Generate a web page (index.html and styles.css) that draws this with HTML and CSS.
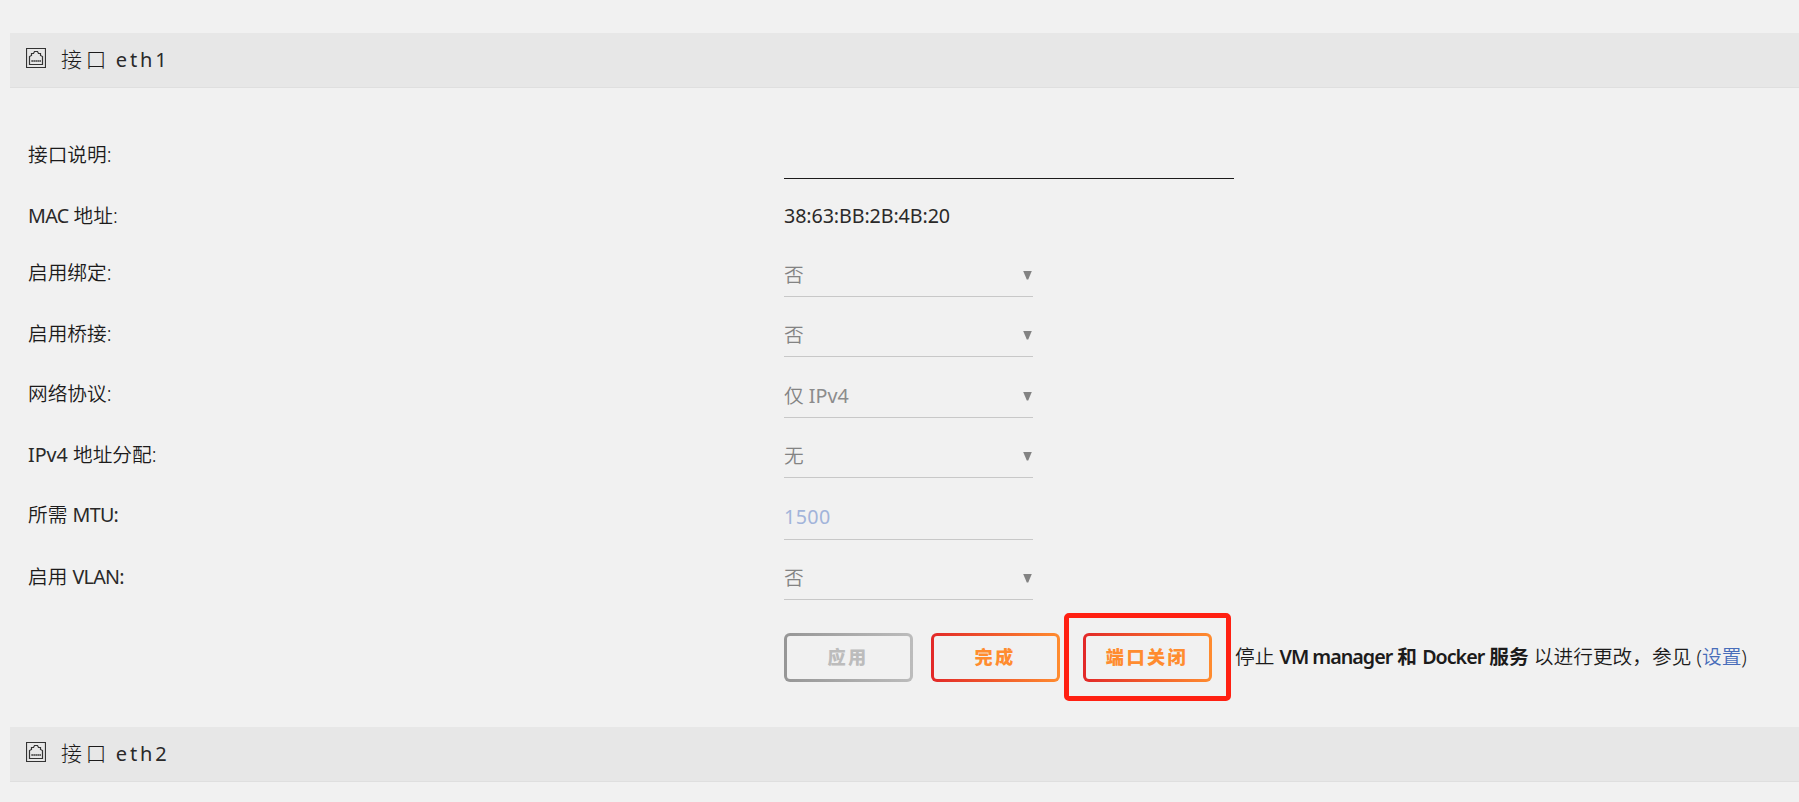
FILE: index.html
```html
<!DOCTYPE html>
<html lang="zh-CN">
<head>
<meta charset="utf-8">
<title>网络设置</title>
<link rel="stylesheet" href="styles.css">
</head>
<body>
<svg class="defs" width="0" height="0">
  <symbol id="port" viewBox="0 0 20 20">
    <path d="M.5 .5H19.5V19.5H.5Z" fill="none" stroke="#333" stroke-width="1.200"/>
    <path d="M3.500 16.500V8.500L5.500 7.500V5.500H7.500L8.500 3.500H11.500L12.500 5.500H14.500V7.500L16.500 8.500V16.500Z" fill="none" stroke="#333" stroke-width="1.200"/>
    <path d="M5.500 13H15" fill="none" stroke="#333" stroke-width="2" stroke-dasharray="1.200 .8"/>
  </symbol>
</svg>
<main class="page">
  <h2 class="title"><svg class="icon"><use href="#port"/></svg><span>接口</span><span class="lat">eth1</span></h2>
  <form class="settings">
    <div class="row row-desc"><div class="label">接口说明:</div><div class="field wide"></div></div>
    <div class="row row-mac"><div class="label"><span class="lat">MAC</span> 地址:</div><div class="mac">38:63:BB:2B:4B:20</div></div>
    <div class="row"><div class="label">启用绑定:</div><div class="field">否<i class="arrow"></i></div></div>
    <div class="row row-bridge"><div class="label">启用桥接:</div><div class="field">否<i class="arrow"></i></div></div>
    <div class="row row-proto"><div class="label">网络协议:</div><div class="field"><span>仅 <span class="lat ip">IPv4</span></span><i class="arrow"></i></div></div>
    <div class="row row-assign"><div class="label"><span class="lat ip">IPv4</span> 地址分配:</div><div class="field">无<i class="arrow"></i></div></div>
    <div class="row row-mtu"><div class="label">所需 <span class="lat">MTU:</span></div><div class="field mtu">1500</div></div>
    <div class="row row-vlan"><div class="label">启用 <span class="lat">VLAN:</span></div><div class="field">否<i class="arrow"></i></div></div>
    <div class="actions">
      <span class="btn disabled">应用</span>
      <span class="btn">完成</span>
      <span class="marked"><span class="btn">端口关闭</span></span>
      <div class="note">停止 <b><span class="vm">VM manager</span> 和 <span class="docker">Docker</span> 服务</b> 以进行更改，参见 (<a>设置</a>)</div>
    </div>
  </form>
  <h2 class="title"><svg class="icon"><use href="#port"/></svg><span>接口</span><span class="lat">eth2</span></h2>
</main>
</body>
</html>
```
FILE: styles.css
```css
*, *::after { box-sizing: border-box; }
body {
  margin: 0;
  height: 802px;
  overflow: hidden;
  background: #f1f1f1;
  color: #1c1b1b;
  font: 350 19.7px/26px "Noto Sans", "Noto Sans CJK SC", sans-serif;
}
.defs { position: absolute; }
.page { padding: 33px 0 0 10px; }
.title {
  display: flex;
  align-items: center;
  height: 55px;
  margin: 0;
  padding: 0 0 2px 16px;
  background: #e7e7e7;
  border-bottom: 1px solid #dfdfdf;
  font-size: 21px;
  font-weight: 300;
  letter-spacing: 3.4px;
  white-space: pre;
}
.title .icon { width: 20px; height: 20px; margin: 0 15px 2px 0; }
.title .lat { margin: 1px 0 0 6px; font-size: 20px; letter-spacing: 2.9px; }
.lat { color: #2a2929; font-weight: 400; letter-spacing: -0.7px; }
.lat.ip { letter-spacing: 0; }
.field .lat { color: #8c8c8c; }
.settings { height: 639px; padding-top: 37px; }
.row {
  display: grid;
  grid-template-columns: 756px 1fr;
  align-items: end;
  height: 60px;
  padding-left: 18px;
}
.row-desc { height: 54px; }
.row-mac { height: 58px; }
.row-mac .label, .row-mac .mac { margin-bottom: 8px; }
.row-proto { height: 61px; }
.row-mtu { height: 62px; }
.label { margin-bottom: 11px; }
.row-bridge .label, .row-assign .label, .row-vlan .label { margin-bottom: 10px; }
.row-mtu .label { margin-bottom: 12px; }
.mac { color: #2a2929; font-weight: 400; letter-spacing: -0.1px; }
.field {
  display: flex;
  justify-content: space-between;
  align-items: center;
  width: 249px;
  height: 44px;
  padding-top: 1px;
  color: #838383;
  border-bottom: 1px solid #c8c8c8;
}
.field.wide { width: 450px; border-color: #1c1b1b; }
.field.mtu { padding: 0 0 2px; color: #a2b4da; font-weight: 400; letter-spacing: .4px; }
.arrow {
  width: 9px;
  height: 9px;
  margin-right: 1px;
  background: #838383;
  clip-path: polygon(0 0, 100% 0, 58% 100%, 42% 100%);
}
.actions {
  display: flex;
  align-items: center;
  height: 49px;
  margin: 33px 0 0 774px;
  white-space: nowrap;
}
.btn {
  display: flex;
  align-items: center;
  justify-content: center;
  width: 129px;
  height: 49px;
  margin-right: 18px;
  padding: 0 1px 1px 0;
  border: 3px solid transparent;
  border-radius: 6px;
  background: linear-gradient(#f1f1f1, #f1f1f1) padding-box, linear-gradient(90deg, #e22828, #ff8c2f) border-box;
  color: #ff8c2f;
  font-size: 18.2px;
  font-weight: 800;
  letter-spacing: 2.4px;
}
.btn.disabled {
  background: linear-gradient(#f1f1f1, #f1f1f1) padding-box, linear-gradient(90deg, #969696, #bcbcbc) border-box;
  color: #bcbcbc;
}
.marked { position: relative; margin-left: 5px; }
.marked::after {
  content: "";
  position: absolute;
  left: -19px;
  top: -20px;
  width: 167px;
  height: 88px;
  border: 5px solid #ff2012;
  border-radius: 5px;
}
.note { margin-left: 5px; padding-bottom: 1px; }
.note b { font-weight: 600; }
.note a { color: #486dba; }
.vm, .docker { letter-spacing: -1px; }
```
